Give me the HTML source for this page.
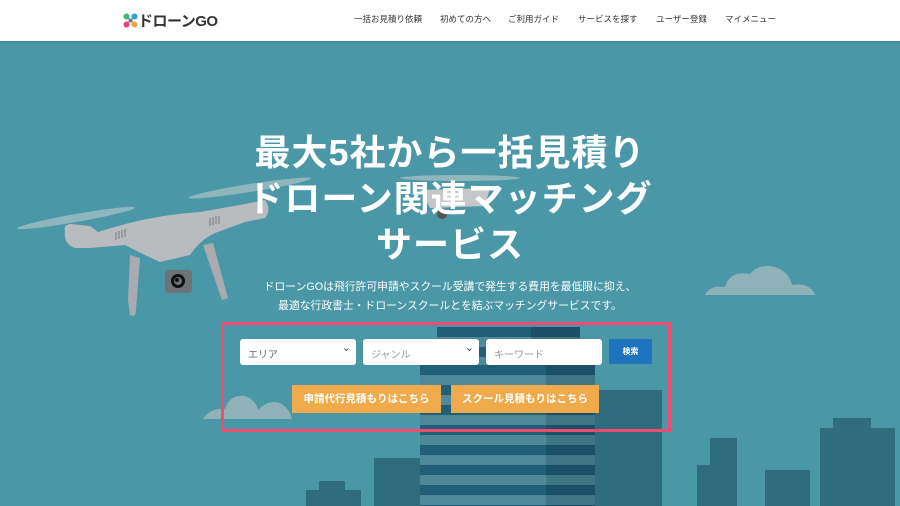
<!DOCTYPE html>
<html><head><meta charset="utf-8"><style>
*{margin:0;padding:0;box-sizing:border-box}
body{width:900px;height:506px;overflow:hidden;font-family:"Liberation Sans","Noto Sans CJK JP",sans-serif;background:#4a97a8;position:relative}
.hdr{position:absolute;left:0;top:0;width:900px;height:41px;background:#fff;box-shadow:0 1px 3px rgba(0,0,0,.15);z-index:5}
.logo{position:absolute;left:123px;top:10px;font-size:15px;color:#333;font-weight:bold;letter-spacing:-0.5px}
.nav{position:absolute;top:13px;font-size:8.5px;color:#333}
.abs{position:absolute}
h1{position:absolute;left:0;width:900px;top:130px;text-align:center;color:#fff;font-size:36px;line-height:46px;font-weight:bold;z-index:3;letter-spacing:1px}
.sub{position:absolute;left:0;width:900px;top:278px;text-align:center;color:#fff;font-size:10.8px;line-height:19px;z-index:3}
.box{position:absolute;left:221px;top:322px;width:450px;height:110px;border:3px solid #f24b6e;z-index:4}
.sel{position:absolute;top:339px;height:26px;background:#fff;border-radius:3px;font-size:10px;color:#666;padding:7px 8px;z-index:4}
.sel.a:after{content:"⌄";position:absolute;right:5px;top:2px;font-size:11px;color:#444}
.btn{position:absolute;top:385px;height:28px;background:#eeaa4b;color:#fff;font-weight:bold;font-size:10.5px;text-align:center;line-height:28px;z-index:4;white-space:nowrap}
</style></head><body>
<div class="hdr">
<div class="logo"><svg width="15" height="15" viewBox="0 0 15 15" style="vertical-align:-2px"><circle cx="3.5" cy="3.5" r="3" fill="#3cb878"/><circle cx="11.5" cy="3.5" r="3" fill="#2aa0d8"/><circle cx="3.5" cy="11.5" r="3" fill="#e8407a"/><circle cx="11.5" cy="11.5" r="3" fill="#f1a83b"/><rect x="5.5" y="5.5" width="4" height="4" fill="#777"/></svg>ドローンGO</div>
<div class="nav" style="left:354px">一括お見積り依頼</div>
<div class="nav" style="left:440px">初めての方へ</div>
<div class="nav" style="left:508px">ご利用ガイド</div>
<div class="nav" style="left:578px">サービスを探す</div>
<div class="nav" style="left:656px">ユーザー登録</div>
<div class="nav" style="left:725px">マイメニュー</div>
</div>
<!-- city -->
<div class="abs" style="left:437px;top:327px;width:143px;height:179px;background:repeating-linear-gradient(#205f78 0 10px,#4e8899 10px 20px)"></div>
<div class="abs" style="left:531px;top:327px;width:49px;height:179px;background:repeating-linear-gradient(#1c5068 0 10px,#3f7484 10px 20px)"></div>
<div class="abs" style="left:420px;top:365px;width:175px;height:141px;background:repeating-linear-gradient(#205f78 0 10px,#4e8899 10px 20px)"></div>
<div class="abs" style="left:546px;top:365px;width:49px;height:141px;background:repeating-linear-gradient(#1c5068 0 10px,#3f7484 10px 20px)"></div>
<div class="abs" style="left:595px;top:390px;width:67px;height:116px;background:#2f6d7e"></div>
<div class="abs" style="left:374px;top:458px;width:46px;height:48px;background:#2f6d7e"></div>
<div class="abs" style="left:306px;top:490px;width:55px;height:16px;background:#2f6d7e"></div>
<div class="abs" style="left:319px;top:481px;width:26px;height:10px;background:#2f6d7e"></div>
<div class="abs" style="left:697px;top:465px;width:40px;height:41px;background:#2f6d7e"></div>
<div class="abs" style="left:710px;top:438px;width:27px;height:30px;background:#2f6d7e"></div>
<div class="abs" style="left:765px;top:470px;width:45px;height:36px;background:#2f6d7e"></div>
<div class="abs" style="left:820px;top:428px;width:75px;height:78px;background:#2f6d7e"></div>
<div class="abs" style="left:833px;top:418px;width:38px;height:12px;background:#2f6d7e"></div>
<!-- clouds -->
<svg class="abs" style="left:700px;top:260px" width="120" height="36"><path d="M5 35 Q10 25 25 27 Q30 10 50 14 Q60 2 78 8 Q90 14 92 25 Q110 22 115 35Z" fill="#8fb2b9"/></svg>
<svg class="abs" style="left:200px;top:390px" width="95" height="30"><path d="M3 29 Q10 18 25 19 Q30 4 45 6 Q56 10 58 20 Q70 8 82 14 Q90 20 92 29Z" fill="#8fb2b9"/></svg>
<!-- big drone (page coords) -->
<svg class="abs" style="left:0;top:0" width="330" height="330">
<ellipse cx="76" cy="218" rx="60" ry="4" transform="rotate(-10 76 218)" fill="#8fb5bd"/>
<ellipse cx="250" cy="188" rx="62" ry="4" transform="rotate(-9 250 188)" fill="#8fb5bd"/>
<path d="M65 230 Q63 226 70 224 L90 226 L98 232 Q150 215 200 212 L240 205 L265 200 Q272 210 265 218 L245 222 L215 233 Q200 240 190 255 L160 262 Q140 253 125 245 L90 248 L75 248 Q63 244 65 230Z" fill="#b9bcbf"/>
<path d="M130 255 L140 258 L136 310 Q136 318 130 315 L128 300Z" fill="#a9acaf"/>
<path d="M203 245 L213 243 L228 298 L222 300Z" fill="#a9acaf"/>
<rect x="165" y="270" width="27" height="23" rx="3" fill="#6e7378"/>
<circle cx="178" cy="281" r="7" fill="#111"/><circle cx="178" cy="281" r="4" fill="#6e7378"/><circle cx="177" cy="280" r="2" fill="#111"/>
<g stroke="#7f8387" stroke-width="1.2"><path d="M116 232v8M119 231v8M122 230v8M125 229v8M210 218v8M213 217v8M216 216v8M219 216v8"/></g>
</svg>
<svg class="abs" style="left:380px;top:170px" width="150" height="60">
<g fill="#c5c7c9"><ellipse cx="80" cy="8" rx="60" ry="3" fill="#8fb5bd"/><path d="M40 20 L110 18 L105 36 L50 38Z"/><circle cx="62" cy="44" r="5" fill="#555"/></g></svg>
<h1>最大5社から一括見積り<br>ドローン関連マッチング<br>サービス</h1>
<div class="sub">ドローンGOは飛行許可申請やスクール受講で発生する費用を最低限に抑え、<br>最適な行政書士・ドローンスクールとを結ぶマッチングサービスです。</div>
<div class="box"></div>
<div class="sel a" style="left:240px;width:116px">エリア</div>
<div class="sel a" style="left:363px;width:116px;color:#999">ジャンル</div>
<div class="sel" style="left:486px;width:116px;color:#999">キーワード</div>
<div class="abs" style="left:609px;top:339px;width:43px;height:25px;background:#1e73be;color:#fff;font-size:8px;font-weight:bold;text-align:center;line-height:25px;z-index:4">検索</div>
<div class="btn" style="left:292px;width:149px">申請代行見積もりはこちら</div>
<div class="btn" style="left:451px;width:148px">スクール見積もりはこちら</div>
</body></html>
